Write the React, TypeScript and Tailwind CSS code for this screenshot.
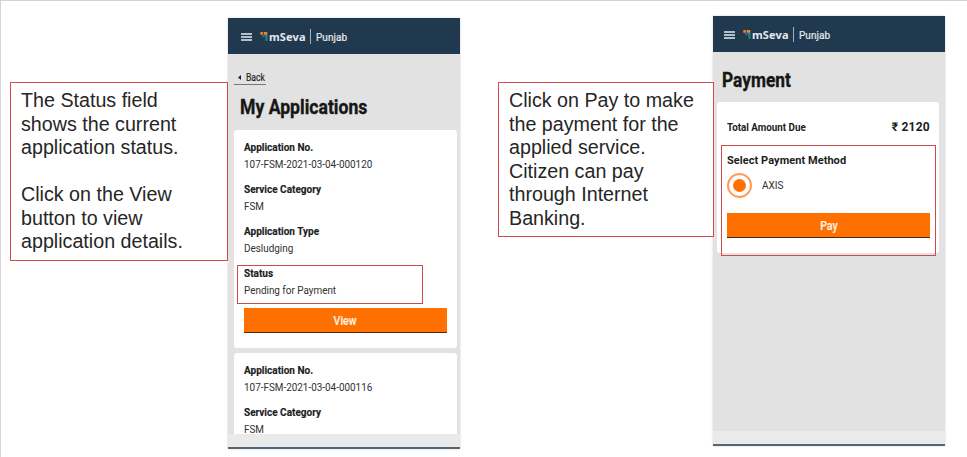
import React from "react";

function TopBar({ className }: { className: string }) {
  return (
    <header className={`flex h-9 shrink-0 items-center bg-[#20394f] pt-px text-[#e4e9ed] ${className}`}>
      <div className="flex w-[11px] flex-col gap-[1px]">
        <span className="h-[2px] bg-[#b4bfc8]" />
        <span className="h-[2px] bg-[#b4bfc8]" />
        <span className="h-[2px] bg-[#b4bfc8]" />
      </div>
      <svg className="-mt-px ml-[8px] h-[9px] w-[9px]" viewBox="0 0 9 9">
        <rect x="0.3" y="0" width="3" height="2.8" fill="#d98328" />
        <rect x="4" y="0" width="3.3" height="2.8" fill="#e58b21" />
        <rect x="2" y="3" width="2.3" height="2.3" fill="#27698b" />
        <rect x="4.8" y="3" width="2.8" height="2.8" fill="#2381a8" />
        <rect x="5.2" y="6" width="2.6" height="2.8" fill="#168657" />
      </svg>
      <span className="w-[37px] whitespace-nowrap font-['Noto_Sans','Open_Sans',sans-serif] text-[11px] font-bold leading-none tracking-[0.15px]">
        mSeva
      </span>
      <span className="ml-[4px] h-[15px] w-px bg-[#a5b1ba]" />
      <span className="ml-[5px] pt-[2px] text-[10px] leading-none tracking-[0.05px] [-webkit-text-stroke:0.2px_currentColor]">Punjab</span>
    </header>
  );
}

function Phone({ className, barClass, children }: { className: string; barClass: string; children: React.ReactNode }) {
  return (
    <section className={`flex w-[232px] shrink-0 flex-col shadow-[0_0_2px_#d0d0d0] ${className}`}>
      <TopBar className={barClass} />
      {children}
      <div className="h-[13px] shrink-0 bg-[#eaeaea]" />
      <div className="h-[2px] shrink-0 bg-[#50677a]" />
    </section>
  );
}

function Title({ className, children }: { className: string; children: React.ReactNode }) {
  return (
    <h1 className={`origin-left whitespace-nowrap text-[20px] font-bold leading-6 text-[#151717] [-webkit-text-stroke:0.35px_currentColor] ${className}`}>
      {children}
    </h1>
  );
}

function Field({ label, value }: { label: string; value: string }) {
  return (
    <div className="mb-[8.3px] text-[10px] leading-[17px] text-[#303132]">
      <div className="font-bold text-[#1c1d1e] [-webkit-text-stroke:0.15px_currentColor]">{label}</div>
      <div className="origin-left scale-x-[0.99]">{value}</div>
    </div>
  );
}

function ActionButton({ children }: { children: React.ReactNode }) {
  return (
    <button className="flex h-[25px] w-[203px] items-center justify-center border-b border-[#4b2b12] bg-[#ff7000] pt-[2px] text-[12px] font-medium text-[#fff0e4] [-webkit-text-stroke:0.2px_currentColor]">
      <span className="scale-x-[0.88]">{children}</span>
    </button>
  );
}

function Callout({ className, children }: { className: string; children: React.ReactNode }) {
  return (
    <aside
      className={`shrink-0 whitespace-nowrap border border-[#d24a4a] bg-white pl-[10px] pt-[6px] font-['Liberation_Sans',Arial,sans-serif] text-[20px] leading-[23.5px] text-[#262626] ${className}`}
    >
      <div className="origin-left scale-x-[0.984]">{children}</div>
    </aside>
  );
}

export default function App() {
  return (
    <main className="flex h-[457px] w-[967px] items-start overflow-hidden border-l border-t border-[#d4d4d4] bg-white font-[Roboto,sans-serif]">
      <Callout className="z-10 ml-[9px] mt-[81px] h-[179px] w-[218px]">
        <p>The Status field<br />shows the current<br />application status.</p>
        <p className="mt-[23.5px]">Click on the View<br />button to view<br />application details.</p>
      </Callout>

      <Phone className="mt-[17px] h-[431px]" barClass="pl-[13px]">
        <div className="flex min-h-0 flex-1 flex-col overflow-hidden bg-[#e2e2e2] pl-[6px]">
          <div className="mt-[16px] flex h-[15px] w-[32px] shrink-0 items-center border-b border-[#777] pl-1 text-[10px] text-[#28292a]">
            <svg className="mr-[5px] h-[5px] w-[3px] shrink-0" viewBox="0 0 3 5">
              <path d="M3 0v5L0 2.5z" fill="#202122" />
            </svg>
            <span className="origin-left scale-x-[0.86] [-webkit-text-stroke:0.2px_currentColor]">Back</span>
          </div>
          <Title className="ml-[5.5px] mt-[10px] scale-x-[0.88]">My Applications</Title>
          <div className="mt-[11px] h-[218px] w-[223px] shrink-0 rounded-[3px] bg-white pl-[10px] pt-[8.5px]">
            <Field label="Application No." value="107-FSM-2021-03-04-000120" />
            <Field label="Service Category" value="FSM" />
            <Field label="Application Type" value="Desludging" />
            <div className="relative">
              <div className="absolute -left-[7px] top-0 h-[39px] w-[186px] border border-[#cf4a4a]" />
              <Field label="Status" value="Pending for Payment" />
            </div>
            <ActionButton>View</ActionButton>
          </div>
          <div className="mt-[5px] h-[120px] w-[223px] shrink-0 rounded-[3px] bg-white pl-[10px] pt-[9px]">
            <Field label="Application No." value="107-FSM-2021-03-04-000116" />
            <Field label="Service Category" value="FSM" />
          </div>
        </div>
      </Phone>

      <Callout className="z-10 ml-[38px] mt-[81px] h-[155px] w-[216px]">
        <p>Click on Pay to make<br />the payment for the<br />applied service.<br />Citizen can pay<br />through Internet<br />Banking.</p>
      </Callout>

      <Phone className="-ml-px mt-[15px] h-[430px]" barClass="pl-[11px]">
        <div className="min-h-0 flex-1 bg-[#e2e2e2] pl-[4px] pt-[16px]">
          <Title className="ml-[5px] scale-x-[0.865]">Payment</Title>
          <div className="relative mt-[10px] h-[151px] w-[222px] rounded-[3px] bg-white pl-[10px] pt-[16px] text-[#1c1d1e]">
            <div className="flex h-[18px] w-[203px] items-center justify-between font-bold">
              <span className="origin-left scale-x-[0.98] text-[10px]">Total Amount Due</span>
              <span className="text-[12px] tracking-[0.25px]">₹ 2120</span>
            </div>
            <div className="mt-[16px] text-[11px] font-bold leading-[18px] tracking-[0.05px]">Select Payment Method</div>
            <div className="mt-[3px] flex h-[25px] items-center">
              <div className="flex size-[25px] items-center justify-center rounded-full border-2 border-[#ff9a5a]">
                <span className="size-[13px] rounded-full bg-[#ff7000]" />
              </div>
              <span className="ml-[10px] text-[10px] text-[#303132]">AXIS</span>
            </div>
            <div className="mt-[15px]"><ActionButton>Pay</ActionButton></div>
            <div className="absolute left-[4px] top-[43px] h-[111px] w-[215px] border border-[#cf4a4a]" />
          </div>
        </div>
      </Phone>
    </main>
  );
}
